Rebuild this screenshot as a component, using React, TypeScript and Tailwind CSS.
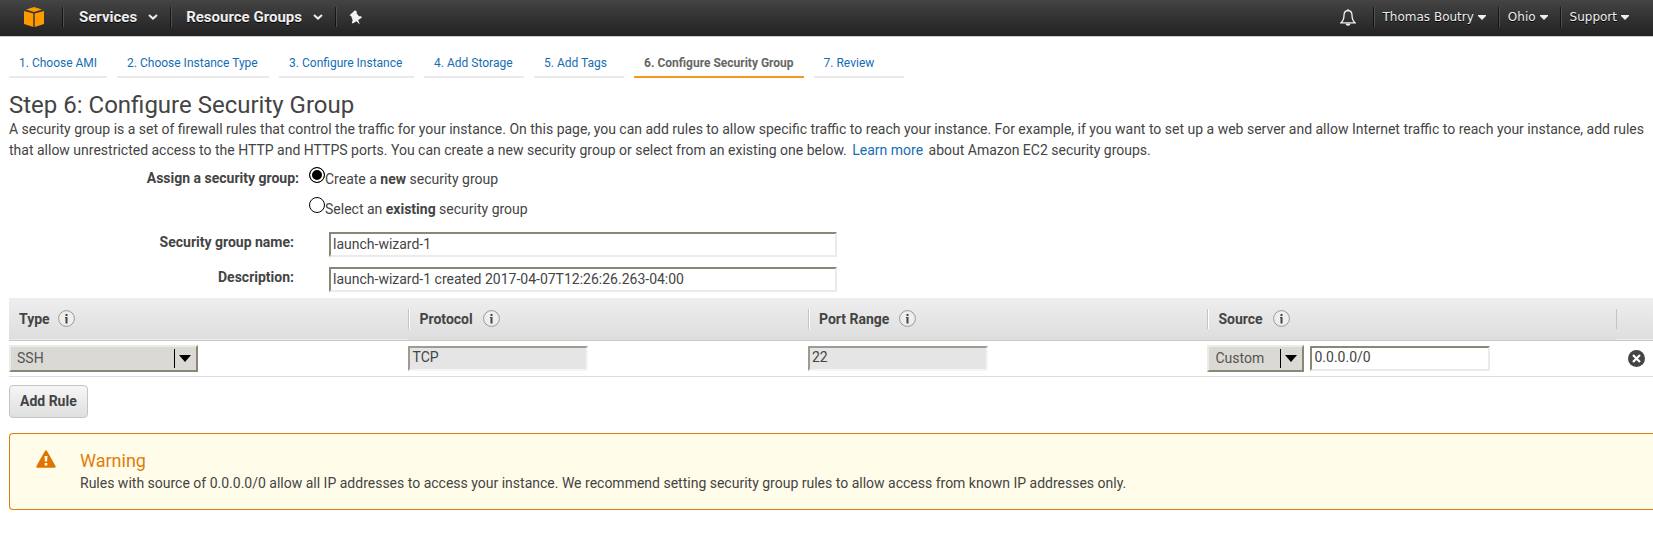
import { useState } from "react";
import type { ReactNode } from "react";

const steps = [
  { label: "1. Choose AMI", width: "min-w-[98px]" },
  { label: "2. Choose Instance Type", width: "min-w-[152px]" },
  { label: "3. Configure Instance", width: "min-w-[135px]" },
  { label: "4. Add Storage", width: "min-w-[100px]" },
  { label: "5. Add Tags", width: "min-w-[90px]" },
  { label: "6. Configure Security Group", width: "min-w-[168px]" },
  { label: "7. Review", width: "min-w-[90px]" },
];
const activeStep = 5;

const sunken =
  "border-2 border-t-[#8b8778] border-l-[#8b8778] border-r-[#edebe6] border-b-[#edebe6] px-0.5 pb-0.5 text-sm leading-5 outline-none";
const sunkenDisabled =
  "border-2 border-t-[#a09a90] border-l-[#a09a90] border-r-[#f4f4f4] border-b-[#f4f4f4] bg-[#e5e5e5] px-0.5 pb-0.5 text-sm leading-5 outline-none";

function Divider() {
  return <span className="h-5 w-0.5 shrink-0 border-l border-l-black/60 border-r border-r-[#505050]" />;
}

function Chevron() {
  return (
    <svg width="10" height="6" viewBox="0 0 10 6" fill="none" stroke="#eee" strokeWidth="2" aria-hidden="true">
      <path d="M1 1l4 3.6L9 1" />
    </svg>
  );
}

function Caret() {
  return (
    <svg width="8" height="5" viewBox="0 0 8 5" fill="#eee" aria-hidden="true">
      <path d="M0 0h8v1L4 5 0 1z" />
    </svg>
  );
}

function NavMenu({ label }: { label: string }) {
  return (
    <button type="button" className="flex items-center gap-[11px] text-[15px] leading-5 font-bold text-[#eee] [text-shadow:0_1px_0_#000]">
      {label}
      <Chevron />
    </button>
  );
}

function AccountMenu({ label }: { label: string }) {
  return (
    <button
      type="button"
      className="flex items-center gap-1 font-['DejaVu_Sans',sans-serif] text-xs text-[#eee] [text-shadow:0_1px_0_#000]"
    >
      {label}
      <Caret />
    </button>
  );
}

function TopBar() {
  return (
    <header className="flex h-9 items-center justify-between bg-linear-to-b from-[#444] to-[#222] pb-0.5 shadow-[0_1px_0_#ccc]">
      <nav className="flex items-center pl-6">
        <a href="#home" aria-label="Home">
          <svg width="20" height="20" viewBox="0 0 20 20" fill="#f90">
            <path d="M10 0l8 2.500L10 5 2 2.500z" />
            <path d="M0 4l9.300 2.500V20L0 17z" />
            <path d="M20 4l-9.300 2.500V20L20 17z" />
          </svg>
        </a>
        <span className="w-[18px]" />
        <Divider />
        <span className="w-[15px]" />
        <NavMenu label="Services" />
        <span className="w-3" />
        <Divider />
        <span className="w-3.5" />
        <NavMenu label="Resource Groups" />
        <span className="w-3" />
        <Divider />
        <button type="button" aria-label="Pin" className="ml-3">
          <svg width="13" height="15" viewBox="0 0 13 15" fill="#f2f2f2">
            <path d="M0.500 5.200L6 0.300l2 1.400-.6 1.300 2.600 3.200 2.200.1.600 1.400-3.600 2.400 1.600 4.300-3.400-3.200-3.700 2.300-.9-.9.900-2.300-1.600-4.200z" />
          </svg>
        </button>
      </nav>
      <nav className="flex items-center pr-6">
        <button type="button" aria-label="Notifications">
          <svg width="16" height="17" viewBox="0 0 16 17" fill="none" stroke="#eee" strokeWidth="1.300">
            <path d="M8 1.500C5.200 1.700 4 3.700 4 6.300 4 10.500 3 12 1 13.800h14c-2-1.800-3-3.300-3-7.500 0-2.600-1.200-4.600-4-4.800z" />
            <path d="M7 1.200h2" />
            <path d="M5.500 14.500a2.500 2.200 0 0 0 5 0z" fill="#eee" stroke="none" />
          </svg>
        </button>
        <span className="w-[17px]" />
        <Divider />
        <span className="w-2" />
        <AccountMenu label="Thomas Boutry" />
        <span className="w-3" />
        <Divider />
        <span className="w-2" />
        <AccountMenu label="Ohio" />
        <span className="w-3" />
        <Divider />
        <span className="w-2" />
        <AccountMenu label="Support" />
      </nav>
    </header>
  );
}

function Steps() {
  return (
    <nav className="flex gap-2.5">
      {steps.map((step, index) => (
        <a
          key={step.label}
          href={`#step-${index + 1}`}
          aria-current={index === activeStep ? "step" : undefined}
          className={`border-b-2 px-2.5 pb-[5px] text-xs leading-4 whitespace-nowrap ${step.width} ${
            index === activeStep ? "border-[#f7981d] font-bold text-[#666]" : "border-[#eaeaea] text-[#146eb4]"
          }`}
        >
          {step.label}
        </a>
      ))}
    </nav>
  );
}

function InfoIcon() {
  return (
    <svg width="17" height="17" viewBox="0 0 17 17" aria-hidden="true">
      <circle cx="8.500" cy="8.500" r="7.900" fill="#eee" stroke="#999" />
      <path d="M7.500 4h2v2h-2zM7 7h2.500v6.500h-2V8H7z" fill="#444" />
    </svg>
  );
}

function HeaderCell({ label, first = false }: { label: string; first?: boolean }) {
  return (
    <th scope="col" className="p-0 text-left align-middle font-bold">
      <div
        className={
          first
            ? "flex h-5 items-center gap-2 px-2.5"
            : "flex h-5 items-center gap-2.5 border-l border-[#c4c4c4] px-2.5 shadow-[inset_1px_0_0_#fff]"
        }
      >
        {label}
        <InfoIcon />
      </div>
    </th>
  );
}

function Picker({ label, className, children }: { label: string; className: string; children: ReactNode }) {
  return (
    <div className={`relative ${className}`}>
      <select
        aria-label={label}
        className="block h-[27px] w-full appearance-none border-2 border-t-[#edebe6] border-l-[#edebe6] border-r-[#8b8778] border-b-[#8b8778] bg-[#dad9d3] pr-7 pl-1.5 text-sm leading-5 text-[#555]"
      >
        {children}
      </select>
      <span className="pointer-events-none absolute inset-y-1 right-[7px] flex items-center border-l border-black pl-1">
        <svg width="12" height="7" viewBox="0 0 12 7" aria-hidden="true">
          <path d="M0 0h12L6 7z" />
        </svg>
      </span>
    </div>
  );
}

function Choice({ id, checked, onSelect, children }: { id: string; checked: boolean; onSelect: () => void; children: ReactNode }) {
  return (
    <div className="flex h-[30px] items-start">
      <input
        id={id}
        type="radio"
        name="assignment"
        checked={checked}
        onChange={onSelect}
        className="size-4 appearance-none rounded-full border border-black bg-white checked:bg-black checked:shadow-[inset_0_0_0_2px_#fff]"
      />
      <label htmlFor={id} className="pt-0.5 leading-5">
        {children}
      </label>
    </div>
  );
}

function AssignmentForm() {
  const [mode, setMode] = useState("new");
  return (
    <form>
      <fieldset className="flex">
        <legend className="float-left w-[290px] pt-[3px] text-right leading-4 font-bold">Assign a security group:</legend>
        <div className="pl-2.5">
          <Choice id="assign-new" checked={mode === "new"} onSelect={() => setMode("new")}>
            Create a <b>new</b> security group
          </Choice>
          <Choice id="assign-existing" checked={mode === "existing"} onSelect={() => setMode("existing")}>
            Select an <b>existing</b> security group
          </Choice>
        </div>
      </fieldset>
      <div className="flex flex-col gap-2.5 pt-[5px]">
        <div className="flex">
          <label htmlFor="group-name" className="w-[285px] text-right leading-5 font-bold">
            Security group name:
          </label>
          <input id="group-name" defaultValue="launch-wizard-1" className={`ml-[35px] h-[25px] w-[508px] ${sunken}`} />
        </div>
        <div className="flex">
          <label htmlFor="group-description" className="w-[285px] text-right leading-5 font-bold">
            Description:
          </label>
          <input
            id="group-description"
            defaultValue="launch-wizard-1 created 2017-04-07T12:26:26.263-04:00"
            className={`ml-[35px] h-[25px] w-[508px] ${sunken}`}
          />
        </div>
      </div>
    </form>
  );
}

function RulesTable() {
  return (
    <table className="mt-1.5 w-full table-fixed border-collapse">
      <colgroup>
        <col className="w-[24.3%]" />
        <col className="w-[24.3%]" />
        <col className="w-[24.3%]" />
        <col />
        <col className="w-[37px]" />
      </colgroup>
      <thead>
        <tr className="h-[42px] border-b border-[#c8c8c8] bg-linear-to-b from-[#eee] to-[#dedede]">
          <HeaderCell label="Type" first />
          <HeaderCell label="Protocol" />
          <HeaderCell label="Port Range" />
          <HeaderCell label="Source" />
          <td className="p-0">
            <div className="h-5 border-l border-[#c4c4c4]" />
          </td>
        </tr>
      </thead>
      <tbody>
        <tr className="h-9 border-b border-[#ddd]">
          <td className="p-0">
            <Picker label="Type" className="w-[189px]">
              <option>SSH</option>
            </Picker>
          </td>
          <td className="p-0">
            <input aria-label="Protocol" disabled value="TCP" readOnly className={`block h-[25px] w-[180px] ${sunkenDisabled}`} />
          </td>
          <td className="p-0">
            <input aria-label="Port Range" disabled value="22" readOnly className={`block h-[25px] w-[180px] ${sunkenDisabled}`} />
          </td>
          <td className="p-0">
            <div className="flex items-center gap-1.5">
              <Picker label="Source type" className="w-[97px]">
                <option>Custom</option>
              </Picker>
              <input aria-label="Source" defaultValue="0.0.0.0/0" className={`h-[25px] w-[180px] ${sunken}`} />
            </div>
          </td>
          <td className="p-0">
            <button type="button" aria-label="Delete rule" className="ml-3 block">
              <svg width="17" height="17" viewBox="0 0 17 17">
                <circle cx="8.500" cy="8.500" r="8.500" fill="#444" />
                <path d="M5 5l7 7M12 5l-7 7" stroke="#fff" strokeWidth="2.200" />
              </svg>
            </button>
          </td>
        </tr>
      </tbody>
    </table>
  );
}

function Warning() {
  return (
    <section className="mt-[15px] flex h-[77px] rounded-l border border-r-0 border-[#df7c0c] bg-[#fffce9] pt-4 pl-[26px]">
      <svg width="20" height="19" viewBox="0 0 20 19" className="shrink-0" aria-hidden="true">
        <path d="M10 1.500L18.500 16.500h-17z" fill="#df7400" stroke="#df7400" strokeWidth="2.400" strokeLinejoin="round" />
        <path d="M8.500 6h3l-.4 5.500H8.900zM8.700 13h2.600v2.400H8.700z" fill="#fffce9" />
      </svg>
      <div className="pl-6">
        <h2 className="text-lg leading-[22px] text-[#df7c0c]">Warning</h2>
        <p className="leading-[22px]">
          Rules with source of 0.0.0.0/0 allow all IP addresses to access your instance. We recommend setting security
          group rules to allow access from known IP addresses only.
        </p>
      </div>
    </section>
  );
}

export default function App() {
  return (
    <div className="min-h-screen bg-white font-[Roboto,sans-serif] text-sm text-[#444]">
      <TopBar />
      <main className="pt-[19px] pl-[9px]">
        <Steps />
        <h1 className="pt-[13px] text-2xl leading-7">Step 6: Configure Security Group</h1>
        <p className="pr-2 leading-[21px]">
          A security group is a set of firewall rules that control the traffic for your instance. On this page, you can
          add rules to allow specific traffic to reach your instance. For example, if you want to set up a web server
          and allow Internet traffic to reach your instance, add rules that allow unrestricted access to the HTTP and
          HTTPS ports. You can create a new security group or select from an existing one below.{" "}
          <a href="#learn-more" className="mx-0.5 text-[#146eb4]">
            Learn more
          </a>{" "}
          about Amazon EC2 security groups.
        </p>
        <div className="pt-1.5">
          <AssignmentForm />
        </div>
        <RulesTable />
        <button
          type="button"
          className="mt-2 block h-[33px] rounded border border-[#c4c4c4] bg-linear-to-b from-[#f6f6f6] to-[#dfdfdf] px-2.5 font-bold"
        >
          Add Rule
        </button>
        <Warning />
      </main>
    </div>
  );
}
